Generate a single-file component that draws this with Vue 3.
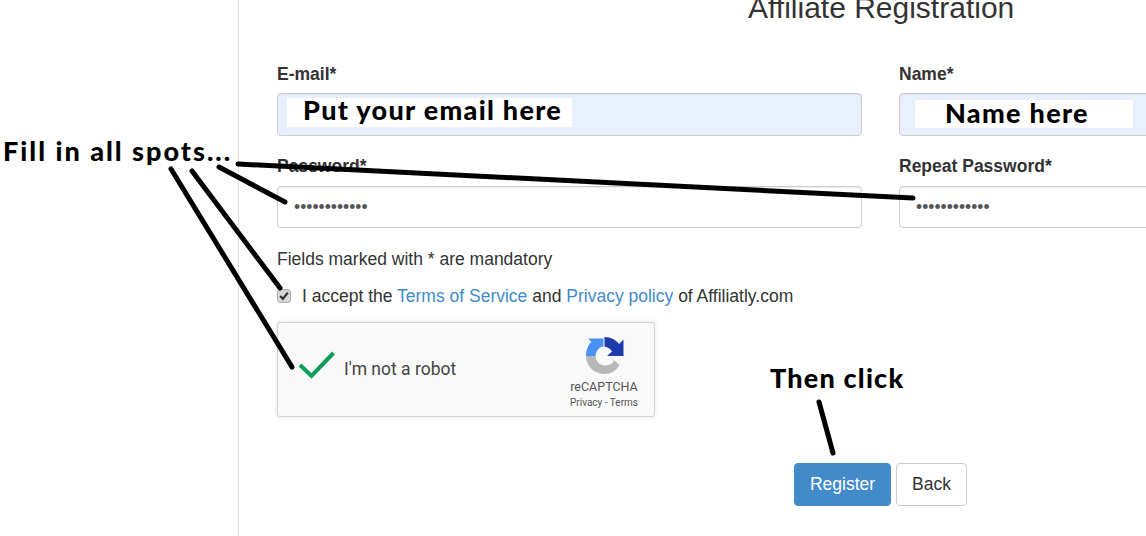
<script setup>
const legalLinks = [
  { text: 'Terms of Service', after: ' and ' },
  { text: 'Privacy policy', after: ' of Affiliatly.com' }
]
const pointers = [
  { x1: 238, y1: 164, x2: 913, y2: 198, w: 5 },
  { x1: 219, y1: 167, x2: 285, y2: 202, w: 5 },
  { x1: 192, y1: 171, x2: 280, y2: 288, w: 5 },
  { x1: 171, y1: 169, x2: 292, y2: 367, w: 5 },
  { x1: 819, y1: 402, x2: 833, y2: 453, w: 5 }
]
</script>

<template>
  <div class="page">
    <aside class="sidebar"></aside>
    <main class="content">
      <h1 class="title">Affiliate Registration</h1>
      <form class="fields" @submit.prevent>
        <div class="field">
          <label class="label">E-mail*</label>
          <div class="input filled"><span class="patch patch-email">Put your email here</span></div>
        </div>
        <div class="field">
          <label class="label">Name*</label>
          <div class="input filled"><span class="patch patch-name">Name here</span></div>
        </div>
        <div class="field lower">
          <label class="label">Password*</label>
          <input class="input secret" type="password" value="abcdefghijkl" />
        </div>
        <div class="field lower">
          <label class="label">Repeat Password*</label>
          <input class="input secret" type="password" value="abcdefghijkl" />
        </div>
      </form>
      <p class="note">Fields marked with * are mandatory</p>
      <div class="accept">
        <span class="check">
          <svg width="10" height="10" viewBox="0 0 9 9"><path d="M1 4.500 3.500 7 8 1.500" fill="none" stroke="#333" stroke-width="2" /></svg>
        </span>
        <span class="accept-text">I accept the <template v-for="l in legalLinks" :key="l.text"><a class="link">{{ l.text }}</a>{{ l.after }}</template></span>
      </div>
      <div class="captcha">
        <svg class="tick" width="38" height="30" viewBox="0 0 38 30"><path d="M2 14 13.500 25 35.500 2" fill="none" stroke="#0f9d58" stroke-width="4" /></svg>
        <span class="robot">I'm not a robot</span>
        <div class="brand">
          <svg class="logo" width="38" height="38" viewBox="0 0 38 38">
            <path d="M0 19C0 13 2 8 5.500 5L2 1.500H17.500V9.500C13 10 10 13.500 9.500 19Z" fill="#4a90f5" />
            <path d="M18.500 0C25 0 30 3 33 7L37.500 2.500V19H21L26 14.500C24.500 12 22 10 18.500 9.500Z" fill="#1c3aa9" />
            <path d="M0 19H9.500C10 25 14 28.500 19 28.500C23 28.500 26 27 28 24L24 19.500 33.500 28C30 34 25 37 19 37C8 37 0 29 0 19Z" fill="#b8b8b8" />
          </svg>
          <span class="brand-name">reCAPTCHA</span>
          <span class="brand-links">Privacy - Terms</span>
        </div>
      </div>
      <div class="actions">
        <button class="btn primary" type="button">Register</button>
        <button class="btn" type="button">Back</button>
      </div>
    </main>
    <svg class="pointers" width="1146" height="536" viewBox="0 0 1146 536">
      <line v-for="(p, i) in pointers" :key="i" :x1="p.x1" :y1="p.y1" :x2="p.x2" :y2="p.y2" :stroke-width="p.w" stroke="#000" stroke-linecap="round" />
    </svg>
    <span class="callout callout-fill">Fill in all spots...</span>
    <span class="callout callout-click">Then click</span>
  </div>
</template>

<style>
html, body { margin: 0; background: #fff; overflow: hidden; }
</style>

<style scoped>
.page {
  position: relative;
  display: flex;
  width: 1146px;
  height: 536px;
  overflow: hidden;
  font-family: "Liberation Sans", Arial, sans-serif;
  font-size: 17.5px;
  color: #333;
}
.sidebar { flex: 0 0 238px; border-right: 1px solid #ddd; }
.content { flex: 0 0 auto; padding-left: 38px; }
.title {
  margin: -6px 0 0 471px;
  font-size: 30px;
  line-height: 28px;
  font-weight: 400;
  white-space: nowrap;
}
.fields {
  display: grid;
  grid-template-columns: 585px 585px;
  column-gap: 37px;
  row-gap: 21px;
  margin-top: 43px;
}
.field { display: flex; flex-direction: column; gap: 9px; }
.field.lower { gap: 10px; }
.label { font-weight: 700; line-height: 19px; display: block; }
.input {
  box-sizing: border-box;
  width: 100%;
  height: 43px;
  border: 1px solid #ccc;
  border-radius: 4px;
  box-shadow: inset 0 1px 1px rgba(0,0,0,.075);
  display: flex;
  align-items: flex-start;
}
.filled { background: #e8f0fe; }
.secret {
  height: 42px;
  padding: 0 16px;
  font-size: 17.5px;
  color: #555;
  background: #fff;
  font-family: inherit;
  outline: none;
}
.patch {
  background: #fff;
  color: #000;
  font-family: "Lato", "DejaVu Sans", sans-serif;
  font-weight: 900;
  font-size: 27px;
  letter-spacing: 1.3px;
  white-space: nowrap;
  box-sizing: border-box;
}
.patch-email { margin: 4px 0 0 9px; width: 285px; height: 29px; line-height: 24px; padding-left: 16px; }
.patch-name { margin: 6px 0 0 15px; width: 218px; height: 28px; line-height: 25px; padding-left: 30px; }
.note { margin: 21px 0 0; line-height: 20px; }
.accept { display: flex; align-items: center; margin-top: 17px; height: 20px; }
.check {
  box-sizing: border-box;
  width: 14px;
  height: 14px;
  border: 1px solid #b0b0b0;
  border-radius: 3px;
  background: #d8d8d8;
  display: flex;
  align-items: center;
  justify-content: center;
}
.accept-text { margin-left: 11px; white-space: nowrap; }
.link { color: #428bca; }
.captcha {
  box-sizing: border-box;
  width: 378px;
  height: 95px;
  margin-top: 16px;
  display: flex;
  align-items: center;
  background: #f9f9f9;
  border: 1px solid #d3d3d3;
  border-radius: 3px;
  box-shadow: 0 0 4px 1px rgba(0,0,0,.08);
  font-family: Roboto, sans-serif;
}
.tick { margin-left: 20px; margin-top: -8px; }
.robot { margin: -2px 0 0 8px; color: #444; line-height: 20px; }
.brand {
  margin: 7px 16px 0 auto;
  width: 68px;
  display: flex;
  flex-direction: column;
  align-items: center;
}
.logo { margin: 0 0 5px 2px; }
.brand-name { font-size: 12.5px; line-height: 14px; color: #555; }
.brand-links { font-size: 10px; line-height: 12px; color: #555; margin-top: 3px; white-space: nowrap; }
.actions { display: flex; gap: 5px; margin: 46px 0 0 517px; }
.btn {
  box-sizing: border-box;
  height: 43px;
  width: 71px;
  border: 1px solid #ccc;
  border-radius: 4px;
  background: #fff;
  color: #333;
  font: inherit;
  padding: 0;
}
.primary { width: 97px; background: #428bca; border-color: #428bca; color: #fff; }
.pointers { position: absolute; inset: 0; pointer-events: none; }
.callout {
  position: absolute;
  font-family: "Lato", "DejaVu Sans", sans-serif;
  font-weight: 900;
  font-size: 27px;
  line-height: 32px;
  color: #000;
  white-space: nowrap;
}
.callout-fill { left: 3px; top: 135px; letter-spacing: 2px; }
.callout-click { left: 770px; top: 362px; letter-spacing: 1.2px; }
</style>
